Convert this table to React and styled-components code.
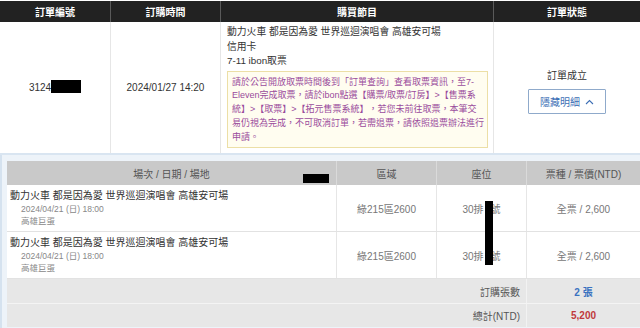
import React from 'react'
import styled, { createGlobalStyle } from 'styled-components'

const GlobalStyle = createGlobalStyle`
  html, body {
    margin: 0;
    padding: 0;
    background: #fff;
    font-family: "Liberation Sans", "Noto Sans CJK TC", sans-serif;
    font-size: 10px;
    color: #333;
  }
`

const orderCols = '111px 110px 273px 146px'
const detailCols = '330px 100px 90px 113px'

const tickets = [
    { area: '綠215區2600', seat: '30排', type: '全票 / 2,600' },
    { area: '綠215區2600', seat: '30排', type: '全票 / 2,600' }
]

export default function App() {
    return (
        <>
            <GlobalStyle />
            <Page>
                <HeadRow>
                    <HeadCell>訂單編號</HeadCell>
                    <HeadCell>訂購時間</HeadCell>
                    <HeadCell>購買節目</HeadCell>
                    <HeadCell $last>訂單狀態</HeadCell>
                </HeadRow>

                <OrderRow>
                    <OrderCell $center>
                        <span>
                            3124
                            <Redact />
                        </span>
                    </OrderCell>
                    <OrderCell $center>2024/01/27 14:20</OrderCell>
                    <OrderCell>
                        <Program>
                            <div>動力火車 都是因為愛 世界巡迴演唱會 高雄安可場</div>
                            <div>信用卡</div>
                            <div>7-11 ibon取票</div>
                        </Program>
                        <Notice>
                            請於公告開放取票時間後到「訂單查詢」查看取票資訊，至7-Eleven完成取票，請於ibon點選【購票/取票/訂房】&gt;【售票系統】&gt;【取票】&gt;【拓元售票系統】，若您未前往取票，本筆交易仍視為完成，不可取消訂單，若需退票，請依照退票辦法進行申請。
                        </Notice>
                    </OrderCell>
                    <OrderCell $center $last>
                        <Status>
                            <div>訂單成立</div>
                            <ToggleButton>
                                隱藏明細
                                <svg width="9" height="6" viewBox="0 0 9 6">
                                    <path
                                        d="M1 5 L4.5 1.5 L8 5"
                                        fill="none"
                                        stroke="#3d6fb5"
                                        strokeWidth="1.1"
                                    />
                                </svg>
                            </ToggleButton>
                        </Status>
                    </OrderCell>
                </OrderRow>

                <Detail>
                    <DetailTable>
                        <DetailHead>
                            <DHeadCell>
                                場次 / 日期 / 場地
                                <HeadRedact />
                            </DHeadCell>
                            <DHeadCell>區域</DHeadCell>
                            <DHeadCell>座位</DHeadCell>
                            <DHeadCell $last>票種 / 票價(NTD)</DHeadCell>
                        </DetailHead>

                        {tickets.map((t, i) => (
                            <TicketRow key={i}>
                                <EventCell>
                                    <EventTitle>動力火車 都是因為愛 世界巡迴演唱會 高雄安可場</EventTitle>
                                    <EventSub>2024/04/21 (日) 18:00</EventSub>
                                    <EventSub>高雄巨蛋</EventSub>
                                </EventCell>
                                <TicketCell>{t.area}</TicketCell>
                                <TicketCell>
                                    {t.seat}
                                    <SeatGap />號
                                </TicketCell>
                                <TicketCell $last>{t.type}</TicketCell>
                            </TicketRow>
                        ))}

                        <SumRow>
                            <SumLabel>訂購張數</SumLabel>
                            <SumValue $color="#3a72c0">2 張</SumValue>
                        </SumRow>
                        <SumRow $top>
                            <SumLabel>總計(NTD)</SumLabel>
                            <SumValue $color="#c0393b">5,200</SumValue>
                        </SumRow>

                        <SeatRedact />
                    </DetailTable>
                </Detail>
            </Page>
        </>
    )
}

const Page = styled.div`
    width: 640px;
    height: 328px;
    overflow: hidden;
    padding-top: 1px;
    box-sizing: border-box;
    background: #fff;
`

const HeadRow = styled.div`
    display: grid;
    grid-template-columns: ${orderCols};
    height: 21px;
    background: #222;
`

const HeadCell = styled.div`
    display: flex;
    align-items: center;
    justify-content: center;
    color: #fff;
    font-weight: bold;
    font-size: 10px;
    border-right: ${(p) => (p.$last ? 'none' : '1px solid #5a5a5a')};
`

const OrderRow = styled.div`
    display: grid;
    grid-template-columns: ${orderCols};
    height: 133px;
    border-bottom: 2px solid #d9e5f1;
    box-sizing: border-box;
`

const OrderCell = styled.div`
    display: flex;
    flex-direction: column;
    justify-content: ${(p) => (p.$center ? 'center' : 'flex-start')};
    align-items: ${(p) => (p.$center ? 'center' : 'stretch')};
    padding: ${(p) => (p.$center ? '0' : '3px 5px 0 6px')};
    border-right: ${(p) => (p.$last ? 'none' : '1px solid #e6e6e6')};
    font-size: 10px;
    color: #333;
`

const Redact = styled.span`
    display: inline-block;
    width: 30px;
    height: 13px;
    background: #000;
    vertical-align: middle;
    margin-top: -2px;
`

const Program = styled.div`
    line-height: 14.5px;
    color: #333;
    font-size: 9.8px;
`

const Notice = styled.div`
    margin-top: 2px;
    padding: 4px 3px 3px 4px;
    background: #fffdf0;
    border: 1px solid #ecdfa6;
    color: #9a4b9c;
    font-size: 9px;
    line-height: 13.8px;
    text-spacing-trim: space-all;
`

const Status = styled.div`
    display: flex;
    flex-direction: column;
    align-items: center;
    gap: 7px;
    margin-top: 6px;
`

const ToggleButton = styled.button`
    display: flex;
    align-items: center;
    justify-content: center;
    gap: 5px;
    width: 78px;
    height: 25px;
    background: #fff;
    border: 1px solid #8faacb;
    border-radius: 1px;
    color: #3d6fb5;
    font-family: inherit;
    font-size: 10px;
    padding: 0;
`

const Detail = styled.div`
    background: #edf3f9;
    padding: 6px 0 0 7px;
    border-left: 2px solid #d5e2ef;
    box-sizing: border-box;
    height: 173px;
`

const DetailTable = styled.div`
    position: relative;
    margin-left: -2px;
`

const DetailHead = styled.div`
    display: grid;
    grid-template-columns: ${detailCols};
    height: 24px;
    background: #c9c9c9;
`

const DHeadCell = styled.div`
    position: relative;
    display: flex;
    align-items: center;
    justify-content: center;
    color: #555;
    font-size: 10px;
    border-right: ${(p) => (p.$last ? 'none' : '1px solid #dadada')};
`

const HeadRedact = styled.span`
    position: absolute;
    right: 7px;
    top: 13px;
    width: 26px;
    height: 9px;
    background: #000;
`

const TicketRow = styled.div`
    display: grid;
    grid-template-columns: ${detailCols};
    height: 47px;
    background: #fff;
    border-bottom: 1px solid #e2e2e2;
    box-sizing: border-box;
`

const EventCell = styled.div`
    display: flex;
    flex-direction: column;
    justify-content: center;
    padding-left: 3px;
    border-right: 1px solid #e6e6e6;
`

const EventTitle = styled.div`
    font-size: 10px;
    color: #333;
    line-height: 14px;
`

const EventSub = styled.div`
    font-size: 8.5px;
    color: #888;
    line-height: 12.5px;
    padding-left: 11px;
`

const TicketCell = styled.div`
    display: flex;
    align-items: center;
    justify-content: center;
    color: #777;
    font-size: 10px;
    border-right: ${(p) => (p.$last ? 'none' : '1px solid #e6e6e6')};
`

const SeatGap = styled.span`
    display: inline-block;
    width: 7px;
`

const SeatRedact = styled.span`
    position: absolute;
    left: 478px;
    top: 40px;
    width: 8px;
    height: 64px;
    background: #000;
`

const SumRow = styled.div`
    display: grid;
    grid-template-columns: 520px 113px;
    height: 24px;
    background: #e7e7e7;
    border-top: ${(p) => (p.$top ? '1px solid #f4f4f4' : 'none')};
    box-sizing: border-box;
`

const SumLabel = styled.div`
    display: flex;
    align-items: center;
    justify-content: flex-end;
    padding-right: 6px;
    color: #555;
    font-size: 10px;
    border-right: 1px solid #f2f2f2;
`

const SumValue = styled.div`
    display: flex;
    align-items: center;
    justify-content: center;
    color: ${(p) => p.$color};
    font-weight: bold;
    font-size: 10px;
`
